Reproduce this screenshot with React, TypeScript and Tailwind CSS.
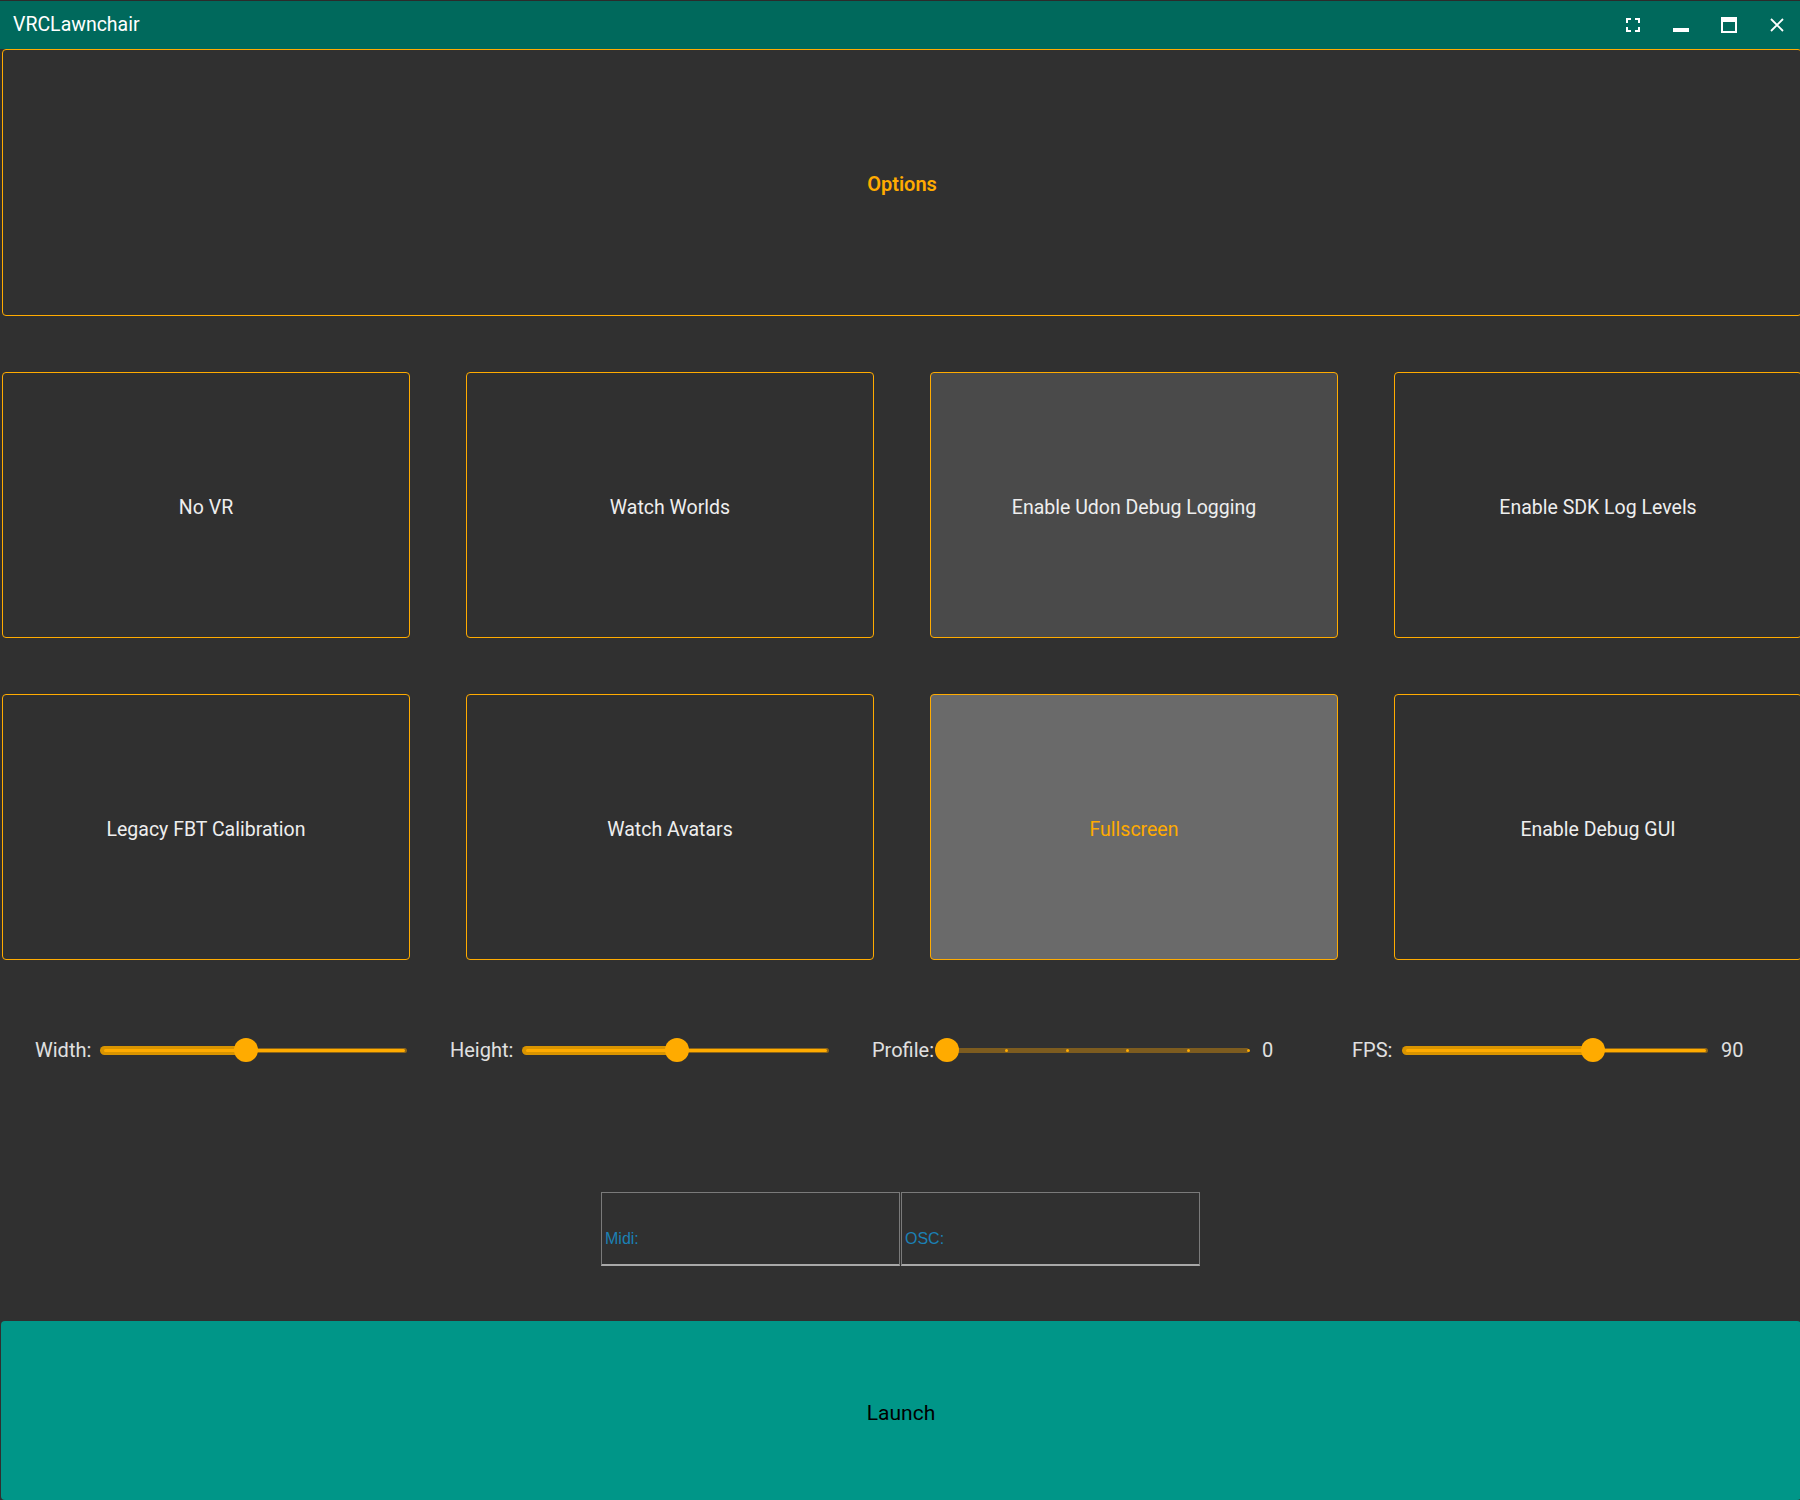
import React from 'react';

function Tile({ label, tone = 'base' }: { label: string; tone?: 'base' | 'hover' | 'active' }) {
  const look =
    tone === 'active'
      ? 'bg-[#6a6a6a] text-[#ffab00]'
      : tone === 'hover'
        ? 'bg-[#4a4a4a] text-[#eeeeee]'
        : 'bg-[#303030] text-[#eeeeee]';
  return (
    <div className={`h-[266px] pt-[6px] flex items-center justify-center rounded-[4px] border border-[#ffab00] text-[19.5px] ${look}`}>
      {label}
    </div>
  );
}

// track drawn from `start` to `start + len`, thumb centred at `start + thumb`
function Slider({ width, start, len, thumb, ticks }: { width: number; start: number; len: number; thumb: number; ticks?: number }) {
  const c = start + thumb;
  return (
    <div className="relative h-[24px] shrink-0" style={{ width }}>
      {ticks ? (
        <>
          <div className="absolute top-[9.5px] h-[5px] rounded-full bg-[#7d5c1f]" style={{ left: start, width: len }} />
          {Array.from({ length: ticks }).map((_, i) => (
            <div
              key={i}
              className="absolute top-[10.5px] w-[3px] h-[3px] rounded-full bg-[#ffab00]"
              style={{ left: start + ((i + 1) * len) / ticks - 2 }}
            />
          ))}
        </>
      ) : (
        <>
          <div className="absolute top-[7.5px] h-[9px] rounded-full bg-[#d99400]" style={{ left: start, width: thumb }} />
          <div className="absolute top-[10.5px] h-[3px] rounded-full bg-[#ffab00]" style={{ left: start + 4, width: thumb - 4 }} />
          <div className="absolute top-[9.5px] h-[5px] rounded-full bg-[#8c6418]" style={{ left: c, width: len - thumb }} />
          <div className="absolute top-[10.5px] h-[3px] rounded-full bg-[#ffab00]" style={{ left: c, width: len - thumb - 2 }} />
        </>
      )}
      <div className="absolute top-0 w-[24px] h-[24px] rounded-full bg-[#ffab00]" style={{ left: c - 12 }} />
    </div>
  );
}

export default function App() {
  return (
    <div className="w-[1800px] h-[1500px] overflow-hidden bg-[#303030] font-['Roboto',sans-serif] flex flex-col">
      <div className="h-[1px] shrink-0 bg-[#2b2b2b]" />
      {/* Title bar */}
      <header className="h-[48px] shrink-0 bg-[#00695c] flex items-center pl-[13px] text-white">
        <span className="text-[19.5px] flex-1">VRCLawnchair</span>
        <div className="flex items-center">
          <svg width="14" height="14" viewBox="0 0 14 14" className="mr-[33px]" fill="none" stroke="white" strokeWidth="2">
            <path d="M1 5V1h4M9 1h4v4M13 9v4H9M5 13H1V9" />
          </svg>
          <div className="w-[16px] h-[4px] bg-white mt-[10px] mr-[32px]" />
          <div className="w-[16px] h-[16px] border-2 border-t-[5px] border-white mr-[33px]" />
          <svg width="14" height="14" viewBox="0 0 14 14" className="mr-[16px]" stroke="white" strokeWidth="1.8">
            <path d="M1 1l12 12M13 1L1 13" />
          </svg>
        </div>
      </header>

      {/* Options + toggles */}
      <div className="ml-[2px] w-[1800px] shrink-0 grid grid-cols-4 gap-[56px]">
        <div className="col-span-4 h-[267px] pt-[2px] flex items-center justify-center rounded-[4px] border border-[#ffab00] text-[#ffab00] text-[20px] font-semibold">
          Options
        </div>
        <Tile label="No VR" />
        <Tile label="Watch Worlds" />
        <Tile label="Enable Udon Debug Logging" tone="hover" />
        <Tile label="Enable SDK Log Levels" />
        <Tile label="Legacy FBT Calibration" />
        <Tile label="Watch Avatars" />
        <Tile label="Fullscreen" tone="active" />
        <Tile label="Enable Debug GUI" />
      </div>

      {/* Sliders */}
      <div className="mt-[78px] h-[24px] shrink-0 pl-[35px] flex items-center text-[#e0e0e0] text-[20px] leading-[24px]">
        <div className="w-[415px] flex items-center">
          <span className="w-[65px]">Width:</span>
          <Slider width={307} start={0} len={307} thumb={146} />
        </div>
        <div className="w-[422px] flex items-center">
          <span className="w-[72px]">Height:</span>
          <Slider width={307} start={0} len={307} thumb={155} />
        </div>
        <div className="w-[480px] flex items-center">
          <span className="w-[63px]">Profile:</span>
          <Slider width={314} start={12} len={302} thumb={0} ticks={5} />
          <span className="ml-[13px]">0</span>
        </div>
        <div className="flex items-center">
          <span className="w-[50px]">FPS:</span>
          <Slider width={306} start={0} len={306} thumb={191} />
          <span className="ml-[13px]">90</span>
        </div>
      </div>

      {/* Midi / OSC */}
      <div className="mt-[130px] h-[74px] shrink-0 ml-[601px] flex gap-[1px] text-[#1b80b5] text-[16px] leading-[16px] font-['Liberation_Sans_Narrow','Liberation_Sans',sans-serif]">
        <div className="w-[299px] h-[74px] border border-[#7a7a7a] border-b-2 border-b-[#a8a8a8] pt-[38px] pl-[3px]">Midi:</div>
        <div className="w-[299px] h-[74px] border border-[#7a7a7a] border-b-2 border-b-[#a8a8a8] pt-[38px] pl-[3px]">OSC:</div>
      </div>

      {/* Launch */}
      <div className="mt-[55px] ml-[1px] w-[1800px] h-[179px] pt-[6px] shrink-0 rounded-[4px] bg-[#009688] flex items-center justify-center text-black text-[21px]">
        Launch
      </div>
    </div>
  );
}
